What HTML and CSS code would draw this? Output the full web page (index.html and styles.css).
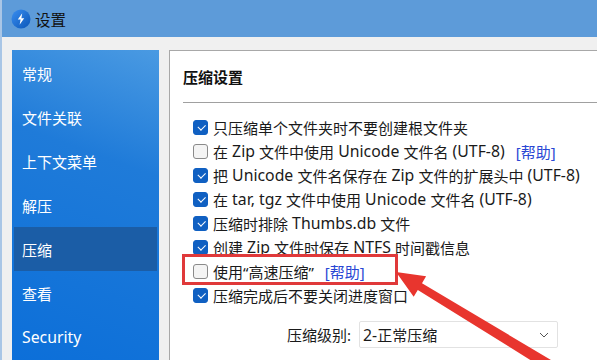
FILE: index.html
```html
<!DOCTYPE html>
<html lang="zh-CN">
<head>
<meta charset="utf-8">
<title>设置</title>
<link rel="stylesheet" href="styles.css">
</head>
<body>
<div class="window">
  <header class="titlebar">
    <svg class="app-icon" width="20" height="20" viewBox="0 0 20 20">
      <defs>
        <linearGradient id="ig" x1="0" y1="0" x2="1" y2="1">
          <stop offset="0" stop-color="#3a8ef0"/>
          <stop offset="1" stop-color="#0a56b8"/>
        </linearGradient>
      </defs>
      <circle cx="10" cy="10" r="9.5" fill="url(#ig)"/>
      <path d="M11.2 4.2 L6.8 10.6 L9.6 10.6 L8.6 15.8 L13.2 9.2 L10.4 9.2 Z" fill="#fff"/>
    </svg>
    <span class="title">设置</span>
  </header>
  <div class="main">
    <nav class="sidebar">
      <div class="nav-item">常规</div>
      <div class="nav-item">文件关联</div>
      <div class="nav-item">上下文菜单</div>
      <div class="nav-item">解压</div>
      <div class="nav-item active">压缩</div>
      <div class="nav-item">查看</div>
      <div class="nav-item"><span class="en">Security</span></div>
    </nav>
    <section class="panel">
      <h2 class="heading">压缩设置</h2>
      <div class="rule"></div>
      <ul class="opts">
        <li class="opt"><span class="cb on"></span>只压缩单个文件夹时不要创建根文件夹</li>
        <li class="opt"><span class="cb"></span>在<span class="en"> Zip </span>文件中使用<span class="en"> Unicode </span>文件名<span class="en"> (UTF-8)</span><a class="help">[帮助]</a></li>
        <li class="opt"><span class="cb on"></span>把<span class="en"> Unicode </span>文件名保存在<span class="en"> Zip </span>文件的扩展头中<span class="en"> (UTF-8)</span></li>
        <li class="opt"><span class="cb on"></span>在<span class="en"> tar, tgz </span>文件中使用<span class="en"> Unicode </span>文件名<span class="en"> (UTF-8)</span></li>
        <li class="opt"><span class="cb on"></span>压缩时排除<span class="en"> Thumbs.db </span>文件</li>
        <li class="opt"><span class="cb on"></span>创建<span class="en"> Zip </span>文件时保存<span class="en"> NTFS </span>时间戳信息</li>
        <li class="opt"><span class="cb"></span>使用“高速压缩”<a class="help">[帮助]</a></li>
        <li class="opt"><span class="cb on"></span>压缩完成后不要关闭进度窗口</li>
      </ul>
      <div class="level">
        <span class="level-label">压缩级别:</span>
        <div class="select">
          <span><span class="en">2-</span>正常压缩</span>
          <svg class="chev" width="10" height="6" viewBox="0 0 10 6"><path d="M1 1 L5 5 L9 1" fill="none" stroke="#555" stroke-width="1"/></svg>
        </div>
      </div>
    </section>
  </div>
  <div class="redbox"></div>
  <svg class="arrow" width="597" height="360" viewBox="0 0 597 360">
    <polygon fill="#e8352e" points="396,272 426.1,276.3 422.0,283.2 595.5,386.5 589.3,396.7 417.8,290.0 413.7,296.8"/>
  </svg>
</div>
</body>
</html>
```

FILE: styles.css
```css
* { box-sizing: border-box; }
html, body { margin: 0; padding: 0; }
body {
  width: 597px;
  height: 360px;
  overflow: hidden;
  background: #f0f0f0;
  font-family: "Noto Sans", "Noto Sans CJK SC", sans-serif;
  color: #1a1a1a;
}
.window {
  position: relative;
  width: 597px;
  height: 360px;
  overflow: hidden;
  border-left: 2px solid #a9c6e6;
  background: #f0f0f0;
}
.titlebar {
  height: 37px;
  background: #5d9bd9;
  display: flex;
  align-items: center;
  padding-left: 9px;
  gap: 4px;
}
.app-icon { display: block; }
.title {
  font-family: "Noto Sans CJK SC", sans-serif;
  font-size: 15.5px;
  color: #111;
}
.main {
  display: flex;
  gap: 10px;
  padding: 13px 0 0 10px;
  height: 323px;
}
.sidebar {
  width: 147px;
  flex: none;
  padding-top: 1px;
  background: linear-gradient(200deg, #4a9ae2 0%, #1f7bd9 35%, #0c6fd9 100%);
}
.nav-item {
  height: 44px;
  margin: 0 2px;
  padding-left: 8px;
  display: flex;
  align-items: center;
  font-family: "Noto Sans", "Noto Sans CJK SC", sans-serif;
  font-size: 15px;
  color: #fff;
}
.nav-item.active { background: #1b5da6; }
.en { font-size: 15.8px; }
.panel {
  flex: 1;
  background: #fff;
  border-top: 1px solid #a8a8a8;
  border-left: 1px solid #a8a8a8;
  padding: 16px 0 0 13px;
}
.heading {
  margin: 0;
  font-family: "Noto Sans CJK SC", sans-serif;
  font-size: 15px;
  font-weight: bold;
  line-height: 20px;
  color: #111;
}
.rule {
  height: 1px;
  background: #a0a0a0;
  margin-top: 15px;
}
.opts {
  list-style: none;
  margin: 12px 0 0 0;
  padding: 0 0 0 10px;
}
.opt {
  height: 24px;
  display: flex;
  align-items: center;
  font-size: 15px;
  white-space: pre;
  color: #1a1a1a;
}
.cb {
  width: 15px;
  height: 15px;
  border-radius: 3px;
  border: 1px solid #8a8a8a;
  background: #f4f4f4;
  margin-right: 5px;
  flex: none;
  position: relative;
}
.cb.on {
  background: #1060c2;
  border-color: #1060c2;
}
.cb.on::after {
  content: "";
  position: absolute;
  left: 4px;
  top: 2.5px;
  width: 6px;
  height: 3.5px;
  border-left: 1.3px solid #fff;
  border-bottom: 1.3px solid #fff;
  transform: rotate(-45deg);
  transform-origin: center;
  margin-top: 1px;
}
.help {
  color: #2a47d4;
  margin-left: 11px;
}
.level {
  display: flex;
  align-items: center;
  margin-top: 14px;
  padding-left: 104px;
  font-size: 15px;
}
.level-label { width: 72px; }
.select {
  width: 199px;
  height: 27px;
  border: 1px solid #e2e2e2;
  border-radius: 2px;
  display: flex;
  align-items: center;
  justify-content: space-between;
  padding: 0 8px 0 3px;
}
.chev { display: block; }
.redbox {
  position: absolute;
  left: 180px;
  top: 254px;
  width: 216px;
  height: 31px;
  border: 3px solid #e0393a;
}
.arrow {
  position: absolute;
  left: -2px;
  top: 0;
}
```
